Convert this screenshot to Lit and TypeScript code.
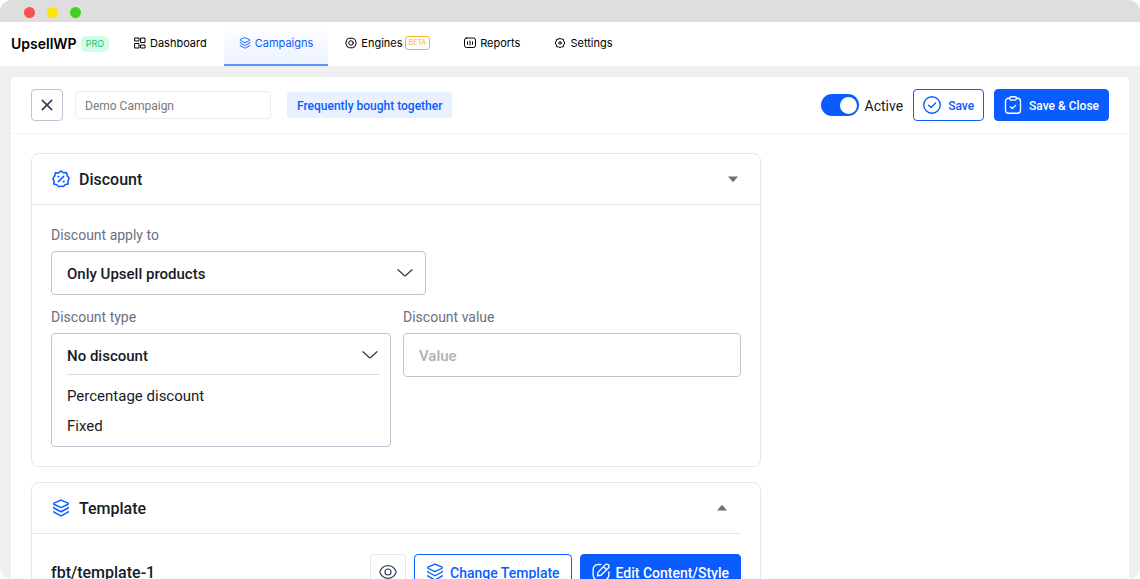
import { LitElement, html, css, svg } from "lit";
import { customElement, property, state } from "lit/decorators.js";

const icons: Record<string, unknown> = {
  grid: svg`<rect x="2" y="2" width="8" height="6"/><rect x="14" y="2" width="8" height="9"/><rect x="2" y="13" width="8" height="9"/><rect x="14" y="16" width="8" height="6"/>`,
  layers: svg`<path d="M12 1.500 21.500 5.500v1.500L12 11.500 2.500 7V5.500z"/><path d="M2.500 11v1L12 17l9.500-5v-1"/><path d="M2.500 16.500v1L12 22.500l9.500-5v-1"/>`,
  nut: svg`<path d="M8.500 2.500h7L20 5l2.500 7-2.500 7-4.500 2.500h-7L4 19l-2.500-7L4 5z"/><circle cx="12" cy="12" r="4.500"/>`,
  reports: svg`<rect x="1" y="2" width="22" height="19" rx="4"/><path d="M7 9.500v5M12 8v8M17 9.500v5"/>`,
  gear: svg`<path d="M12 2.500l2.800 1.900 3.700-.1.900 3.700 2.100 4-2.100 4-.9 3.700-3.700-.1L12 21.500l-2.800-1.900-3.700.1-.9-3.700L2.500 12l2.100-4 .9-3.700 3.700.1z"/><circle cx="12" cy="12" r="2.500"/>`,
  close: svg`<path d="M4 4 20 20M20 4 4 20"/>`,
  check: svg`<circle cx="12" cy="12" r="11"/><path d="M7.500 12.300l3.200 3 6-6"/>`,
  clipboard: svg`<path d="M7.500 3H6a4 4 0 0 0-4 4v12a4 4 0 0 0 4 4h12a4 4 0 0 0 4-4V7a4 4 0 0 0-4-4h-1.500"/><rect x="7.500" y="1" width="9" height="4.500" rx="1.800"/><path d="M8.500 14.500l2.500 2.300 4.500-4.300"/>`,
  percent: svg`<path d="M12 1.200l3.200 2.500 4.300-.3.900 4.300L22.800 11l-1.600 3.800.3 4-4 1L15 22l-3-.5L9 22.300l-2.800-2.700-3.900-.8.400-4L1.200 11.500 3.600 8l.9-4.300 4.300.2z"/><path d="M8.500 15.500l7-7"/><path d="M8.500 8.800h.4M15.300 15.300h.4" stroke-width="2.600"/>`,
  eye: svg`<path d="M1 12c2-5.500 6-8.500 11-8.500s9 3 11 8.500c-2 5.500-6 8.500-11 8.500S3 17.500 1 12z"/><circle cx="12" cy="12" r="4"/>`,
  edit: svg`<path d="M12 2H8a6.500 6.500 0 0 0-6.500 6.500V16A6.500 6.500 0 0 0 8 22.500h8a6.500 6.500 0 0 0 6.500-6.500v-4"/><path d="M8 12.500 17.500 2.500a2.900 2.900 0 0 1 4.300 4.200L12 16.300 7.300 17zM15.500 5l3.900 3.900"/>`,
  chevron: svg`<path d="M1.500 7l9 8.500q1.500 1.200 3 0l9-8.500"/>`,
};

@customElement("ui-icon")
export class UiIcon extends LitElement {
  @property() name = "";
  static styles = css`
    :host { display: inline-flex; flex: none; width: 18px; height: 18px; }
    svg { width: 100%; height: 100%; fill: none; stroke: currentColor; stroke-width: var(--stroke, 2); stroke-linecap: round; stroke-linejoin: round; }
  `;
  render() {
    return html`<svg viewBox="0 0 24 24" aria-hidden="true">${icons[this.name]}</svg>`;
  }
}

@customElement("app-root")
export class AppRoot extends LitElement {
  @state() private discountType = "No discount";

  static styles = css`
    :host {
      --blue: #0a5cff;
      --ink: #161b26;
      --line: #e6e6ec;
      --field: #c2c2d3;
      display: flex; flex-direction: column; height: 100vh; overflow: hidden;
      background: #efefef; color: var(--ink);
      border-radius: 12px;
      font: 16px/20px Roboto, "Liberation Sans", sans-serif;
    }
    * { box-sizing: border-box; }
    button, input, select { font: inherit; color: inherit; margin: 0; }
    button, select { cursor: pointer; }
    .titlebar { flex: none; display: flex; align-items: center; gap: 12px; height: 22px; padding: 2px 24px 0; background: #dedede; }
    .dot { width: 11px; height: 11px; border-radius: 50%; }
    .red { background: #f6504f; }
    .yellow { background: #ffe500; }
    .green { background: #43d01f; }

    .nav { flex: none; display: flex; height: 44px; padding-left: 11px; background: #fff; font: 11px/16px Inter, sans-serif; color: #000; }
    .brand { display: flex; align-items: center; gap: 4px; width: 106px; font-size: 14px; font-weight: 600; }
    .pro { padding: 0 5px; border-radius: 5px; background: #d1fde6; color: #16c172; font-size: 9px; font-weight: 400; }
    .links { display: flex; }
    .tab { display: flex; align-items: center; gap: 4px; padding: 0 17px 1px; color: #000; text-decoration: none; border-bottom: 2px solid transparent; }
    .tab ui-icon { width: 12px; height: 12px; }
    .tab.current { padding: 0 15px 1px; color: var(--blue); border-color: #5b93ff; background: linear-gradient(#fff, #ecf2ff); }
    .tab.current ui-icon { --stroke: 1.8; }
    .label { display: flex; align-items: center; gap: 2px; }
    .beta { padding: 0 3px; border: 1px solid #fdb022; border-radius: 3px; color: #fdb022; font-size: 7px; line-height: 12px; }

    .page { flex: 1; min-height: 0; margin: 11px 11px 0; background: #fff; border-radius: 3px 3px 0 0; overflow-y: auto; scrollbar-width: none; }
    .toolbar { display: flex; align-items: center; height: 57px; padding: 0 20px; border-bottom: 1px solid #f3f3f3; font-size: 12px; }
    .icon-btn { display: grid; place-items: center; padding: 0; width: 32px; height: 32px; border: 1px solid var(--field); border-radius: 4px; background: #fff; color: #344054; }
    .icon-btn ui-icon { width: 14px; height: 14px; --stroke: 2.8; }
    .name { width: 196px; height: 28px; margin-left: 12px; padding: 2px 9px 0; border: 1px solid #ececec; border-radius: 4px; color: #7a7a7a; }
    .kind { margin-left: 16px; padding: 4px 10px 2px; border-radius: 3px; background: #e9f0ff; color: var(--blue); font-weight: 500; }
    .switch { display: flex; align-items: center; gap: 6px; margin-left: auto; font-size: 14px; }
    .switch span { padding-top: 2px; }
    .switch input { appearance: none; display: flex; align-items: center; justify-content: flex-start; width: 38px; height: 22px; margin: 0; padding: 2px; border-radius: 11px; background: #c2c2d3; }
    .switch input:checked { justify-content: flex-end; background: var(--blue); }
    .switch input::before { content: ""; width: 17px; height: 17px; border-radius: 50%; background: #fff; }
    .btn { display: inline-flex; align-items: center; justify-content: center; gap: 7px; height: 32px; padding: 0 9px; border: 1px solid var(--blue); border-radius: 4px; background: #fff; color: var(--blue); font-weight: 500; white-space: nowrap; }
    .btn.solid { background: var(--blue); color: #fff; }
    .btn span { padding-top: 2px; }
    .toolbar .btn { margin-left: 10px; }
    .btn ui-icon { width: 18px; height: 18px; --stroke: 1.8; }

    .content { display: grid; gap: 15px; max-width: 770px; padding: 19px 20px; }
    .card { border: 1px solid var(--line); border-radius: 8px; }
    .head { display: flex; align-items: center; gap: 9px; height: 51px; padding: 0 22px 0 20px; border-bottom: 1px solid var(--line); }
    .head h2 { flex: 1; margin: 0; padding-top: 2px; font-size: 16px; font-weight: 500; line-height: 20px; }
    .head ui-icon { color: var(--blue); }
    .toggle { display: grid; padding: 0; border: 0; background: none; color: #6b7080; }
    .caret { width: 10px; height: 6px; fill: currentColor; }
    .head.inset { margin-right: 19px; padding-right: 14px; }
    .body { display: grid; gap: 12px; padding: 20px 19px 19px; }
    .row { display: grid; grid-template-columns: 340fr 338fr; gap: 12px; align-items: start; }
    .field { display: grid; gap: 6px; }
    .field label { color: #6b7080; font-size: 14px; }
    .short { max-width: 375px; }
    .box { border: 1px solid var(--field); border-radius: 4px; background: #fff; }
    .pick { display: grid; align-items: center; }
    .pick select, .pick ui-icon { grid-area: 1 / 1; }
    .pick select { appearance: none; width: 100%; height: 42px; padding: 2px 40px 0 15px; border: 0; background: none; font-weight: 500; font-size: 15px; }
    .pick ui-icon { justify-self: end; margin-right: 12px; width: 16px; height: 16px; color: #344054; pointer-events: none; }
    .pick.open select { height: 40px; padding-top: 4px; }
    .pick.open ui-icon { margin-top: 2px; }
    .options { display: grid; margin: 0 10px 0 15px; padding: 6px 0 5px; border-top: 1px solid #dedee0; }
    .options button { height: 30px; padding: 0; border: 0; background: none; text-align: left; font-size: 15px; }
    .value { width: 100%; height: 44px; padding: 2px 15px 0; border: 1px solid var(--field); border-radius: 4px; font-size: 15px; font-weight: 500; }
    .value::placeholder { color: #b0b0b0; opacity: 1; }
    .template { display: flex; align-items: center; gap: 8px; padding: 20px 19px; }
    .template strong { flex: 1; padding-top: 2px; font-weight: 500; }
    .template .btn, .template .icon-btn { height: 36px; font-size: 14px; }
    .template .icon-btn { width: 36px; border-color: var(--line); }
    .template .icon-btn ui-icon { width: 18px; height: 18px; --stroke: 1.6; }
    .template .btn { gap: 6px; padding: 0 11px; }
  `;

  private tab(icon: string, text: string, current = false, beta = false) {
    return html`<a class="tab ${current ? "current" : ""}" href="#${text.toLowerCase()}">
      <ui-icon name=${icon}></ui-icon><span class="label">${text}${beta ? html`<span class="beta">BETA</span>` : ""}</span></a>`;
  }

  render() {
    return html`
      <div class="titlebar"><span class="dot red"></span><span class="dot yellow"></span><span class="dot green"></span></div>
      <header class="nav">
        <div class="brand">UpsellWP<span class="pro">PRO</span></div>
        <nav class="links">
          ${this.tab("grid", "Dashboard")}
          ${this.tab("layers", "Campaigns", true)}
          ${this.tab("nut", "Engines", false, true)}
          ${this.tab("reports", "Reports")}
          ${this.tab("gear", "Settings")}
        </nav>
      </header>
      <main class="page">
        <div class="toolbar">
          <button class="icon-btn" aria-label="Close"><ui-icon name="close"></ui-icon></button>
          <input class="name" aria-label="Campaign name" value="Demo Campaign" />
          <span class="kind">Frequently bought together</span>
          <label class="switch"><input type="checkbox" role="switch" checked /><span>Active</span></label>
          <button class="btn"><ui-icon name="check"></ui-icon><span>Save</span></button>
          <button class="btn solid"><ui-icon name="clipboard"></ui-icon><span>Save &amp; Close</span></button>
        </div>
        <div class="content">
          <section class="card">
            <div class="head">
              <ui-icon name="percent"></ui-icon>
              <h2>Discount</h2>
              <button class="toggle" aria-label="Toggle discount"><svg class="caret" viewBox="0 0 10 6"><path d="M0 .5h10L5.500 5.700h-1z"/></svg></button>
            </div>
            <div class="body">
              <div class="field short">
                <label for="apply">Discount apply to</label>
                <div class="box pick">
                  <select id="apply"><option>Only Upsell products</option></select>
                  <ui-icon name="chevron"></ui-icon>
                </div>
              </div>
              <div class="row">
                <div class="field">
                  <label for="type">Discount type</label>
                  <div class="box">
                    <div class="pick open">
                      <select id="type"><option>${this.discountType}</option></select>
                      <ui-icon name="chevron"></ui-icon>
                    </div>
                    <div class="options">
                      ${["Percentage discount", "Fixed"].map(
                        (o) => html`<button @click=${() => (this.discountType = o)}>${o}</button>`
                      )}
                    </div>
                  </div>
                </div>
                <div class="field">
                  <label for="value">Discount value</label>
                  <input class="value" id="value" placeholder="Value" />
                </div>
              </div>
            </div>
          </section>
          <section class="card">
            <div class="head inset">
              <ui-icon name="layers"></ui-icon>
              <h2>Template</h2>
              <button class="toggle" aria-label="Toggle template"><svg class="caret" viewBox="0 0 10 6"><path d="M0 5.500h10L5.500.300h-1z"/></svg></button>
            </div>
            <div class="template">
              <strong>fbt/template-1</strong>
              <button class="icon-btn" aria-label="Preview"><ui-icon name="eye"></ui-icon></button>
              <button class="btn"><ui-icon name="layers"></ui-icon><span>Change Template</span></button>
              <button class="btn solid"><ui-icon name="edit"></ui-icon><span>Edit Content/Style</span></button>
            </div>
          </section>
        </div>
      </main>
    `;
  }
}
